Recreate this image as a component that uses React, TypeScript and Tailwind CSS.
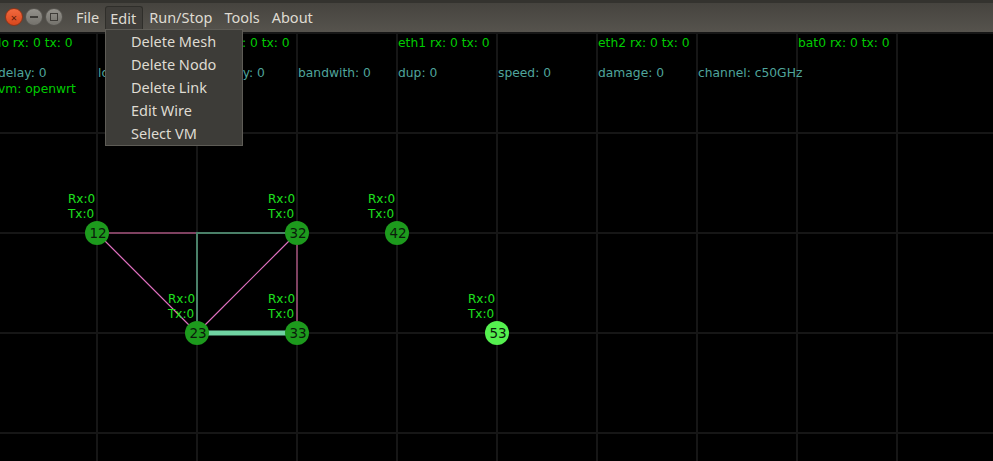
import React from "react"

const menus = ["File", "Edit", "Run/Stop", "Tools", "About"]
const editItems = ["Delete Mesh", "Delete Nodo", "Delete Link", "Edit Wire", "Select VM"]

const topStats = [
    { x: -2, t: "lo rx: 0 tx: 0" },
    { x: 198, t: "eth0 rx: 0 tx: 0" },
    { x: 398, t: "eth1 rx: 0 tx: 0" },
    { x: 598, t: "eth2 rx: 0 tx: 0" },
    { x: 798, t: "bat0 rx: 0 tx: 0" },
]

const linkStats = [
    { x: -2, t: "delay: 0" },
    { x: 98, t: "loss: 0" },
    { x: 198, t: "capacity: 0" },
    { x: 298, t: "bandwith: 0" },
    { x: 398, t: "dup: 0" },
    { x: 498, t: "speed: 0" },
    { x: 598, t: "damage: 0" },
    { x: 698, t: "channel: c50GHz" },
]

const nodes = [
    { id: 12, x: 97, y: 233 },
    { id: 32, x: 297, y: 233 },
    { id: 42, x: 397, y: 233 },
    { id: 23, x: 197, y: 333 },
    { id: 33, x: 297, y: 333 },
    { id: 53, x: 497, y: 333, active: true },
]

const font = "'DejaVu Sans', sans-serif"

function Canvas() {
    const vLines = Array.from({ length: 10 }, (_, i) => 97 + i * 100)
    const hLines = [33, 133, 233, 333, 433]
    return (
        <svg width="993" height="429" viewBox="0 32 993 429" className="block">
            <rect x="0" y="32" width="993" height="429" fill="#000" />
            {vLines.map((x) => (
                <line key={"v" + x} x1={x} y1={32} x2={x} y2={461} stroke="#161616" strokeWidth="2" />
            ))}
            {hLines.map((y) => (
                <line key={"h" + y} x1={0} y1={y} x2={993} y2={y} stroke="#161616" strokeWidth="2" />
            ))}

            {/* stats */}
            <g fontFamily={font} fontSize="12.3">
                {topStats.map((s) => (
                    <text key={s.t} x={s.x} y={47} fill="#00cc00">{s.t}</text>
                ))}
                {linkStats.map((s) => (
                    <text key={s.t} x={s.x} y={77} fill="#4fa59c">{s.t}</text>
                ))}
                <text x={-2} y={93} fill="#00cc00">vm: openwrt</text>
            </g>

            {/* links */}
            <line x1={97} y1={233} x2={297} y2={233} stroke="#7e4160" strokeWidth="2" />
            <polyline points="197,333 197,233 297,233" fill="none" stroke="#4a8068" strokeWidth="2" />
            <line x1={297} y1={233} x2={297} y2={333} stroke="#7e4160" strokeWidth="2" />
            <line x1={97} y1={233} x2={197} y2={333} stroke="#e070c0" strokeWidth="1.2" />
            <line x1={297} y1={233} x2={197} y2={333} stroke="#e070c0" strokeWidth="1.2" />
            <line x1={197} y1={333} x2={297} y2={333} stroke="#6fd3a2" strokeWidth="5" />

            {/* nodes */}
            {nodes.map((n) => (
                <g key={n.id} fontFamily={font}>
                    <text x={n.x - 29} y={203} dy={n.y - 233} fontSize="12" fill="#1ee01e">Rx:0</text>
                    <text x={n.x - 29} y={218} dy={n.y - 233} fontSize="12" fill="#1ee01e">Tx:0</text>
                    <circle cx={n.x} cy={n.y} r="12" fill={n.active ? "#55f04f" : "#1d9a1d"} />
                    <text x={n.x + 1} y={n.y + 5} textAnchor="middle" fontSize="13.5" fill="#0b1a0b">{n.id}</text>
                </g>
            ))}
        </svg>
    )
}

export default function App() {
    return (
        <div className="relative flex h-[461px] w-[993px] flex-col overflow-hidden bg-black" style={{ fontFamily: "'Noto Sans', 'Open Sans', sans-serif" }}>
            {/* title + menu bar */}
            <div className="flex h-[32px] shrink-0 items-center border-t-[3px] border-[#34332f] bg-gradient-to-b from-[#46443f] to-[#56534d]">
                <div className="mb-[1px] ml-[5px] flex items-center gap-[2px]">
                    <div className="flex h-[18px] w-[18px] items-center justify-center rounded-full border border-[#8e3418] bg-gradient-to-b from-[#f2693e] to-[#d9471c] text-[11px] leading-none text-[#5a1a08]">×</div>
                    <div className="flex h-[18px] w-[18px] items-center justify-center rounded-full border border-[#55534e] bg-gradient-to-b from-[#94928c] to-[#74726c]">
                        <div className="h-[2px] w-[8px] bg-[#3e3c38]" />
                    </div>
                    <div className="flex h-[18px] w-[18px] items-center justify-center rounded-full border border-[#55534e] bg-gradient-to-b from-[#94928c] to-[#74726c]">
                        <div className="h-[8px] w-[8px] border border-[#3e3c38]" />
                    </div>
                </div>
                <div className="ml-[7px] flex h-full items-end">
                    {menus.map((m) => (
                        <div
                            key={m}
                            className={
                                m === "Edit"
                                    ? "flex h-[26px] items-center rounded-t-[3px] border border-b-0 border-[#2f2e2a] bg-[#403e3a] pb-[2px] pl-[4px] pr-[6px] text-[14.5px] text-[#dfdbd2]"
                                    : "flex h-[26px] items-center border border-transparent px-[5px] pb-[2px] text-[14.5px] text-[#dfdbd2]"
                            }
                        >
                            {m}
                        </div>
                    ))}
                </div>
            </div>

            <div className="flex-1">
                <Canvas />
            </div>

            {/* open Edit menu */}
            <div className="absolute left-[105px] top-[29px] w-[138px] border border-[#5e5c56] bg-[#3d3c38]">
                {editItems.map((it) => (
                    <div key={it} className="flex h-[23px] items-center pl-[25px] text-[14.5px] text-[#dfdbd2]">
                        {it}
                    </div>
                ))}
            </div>
        </div>
    )
}
